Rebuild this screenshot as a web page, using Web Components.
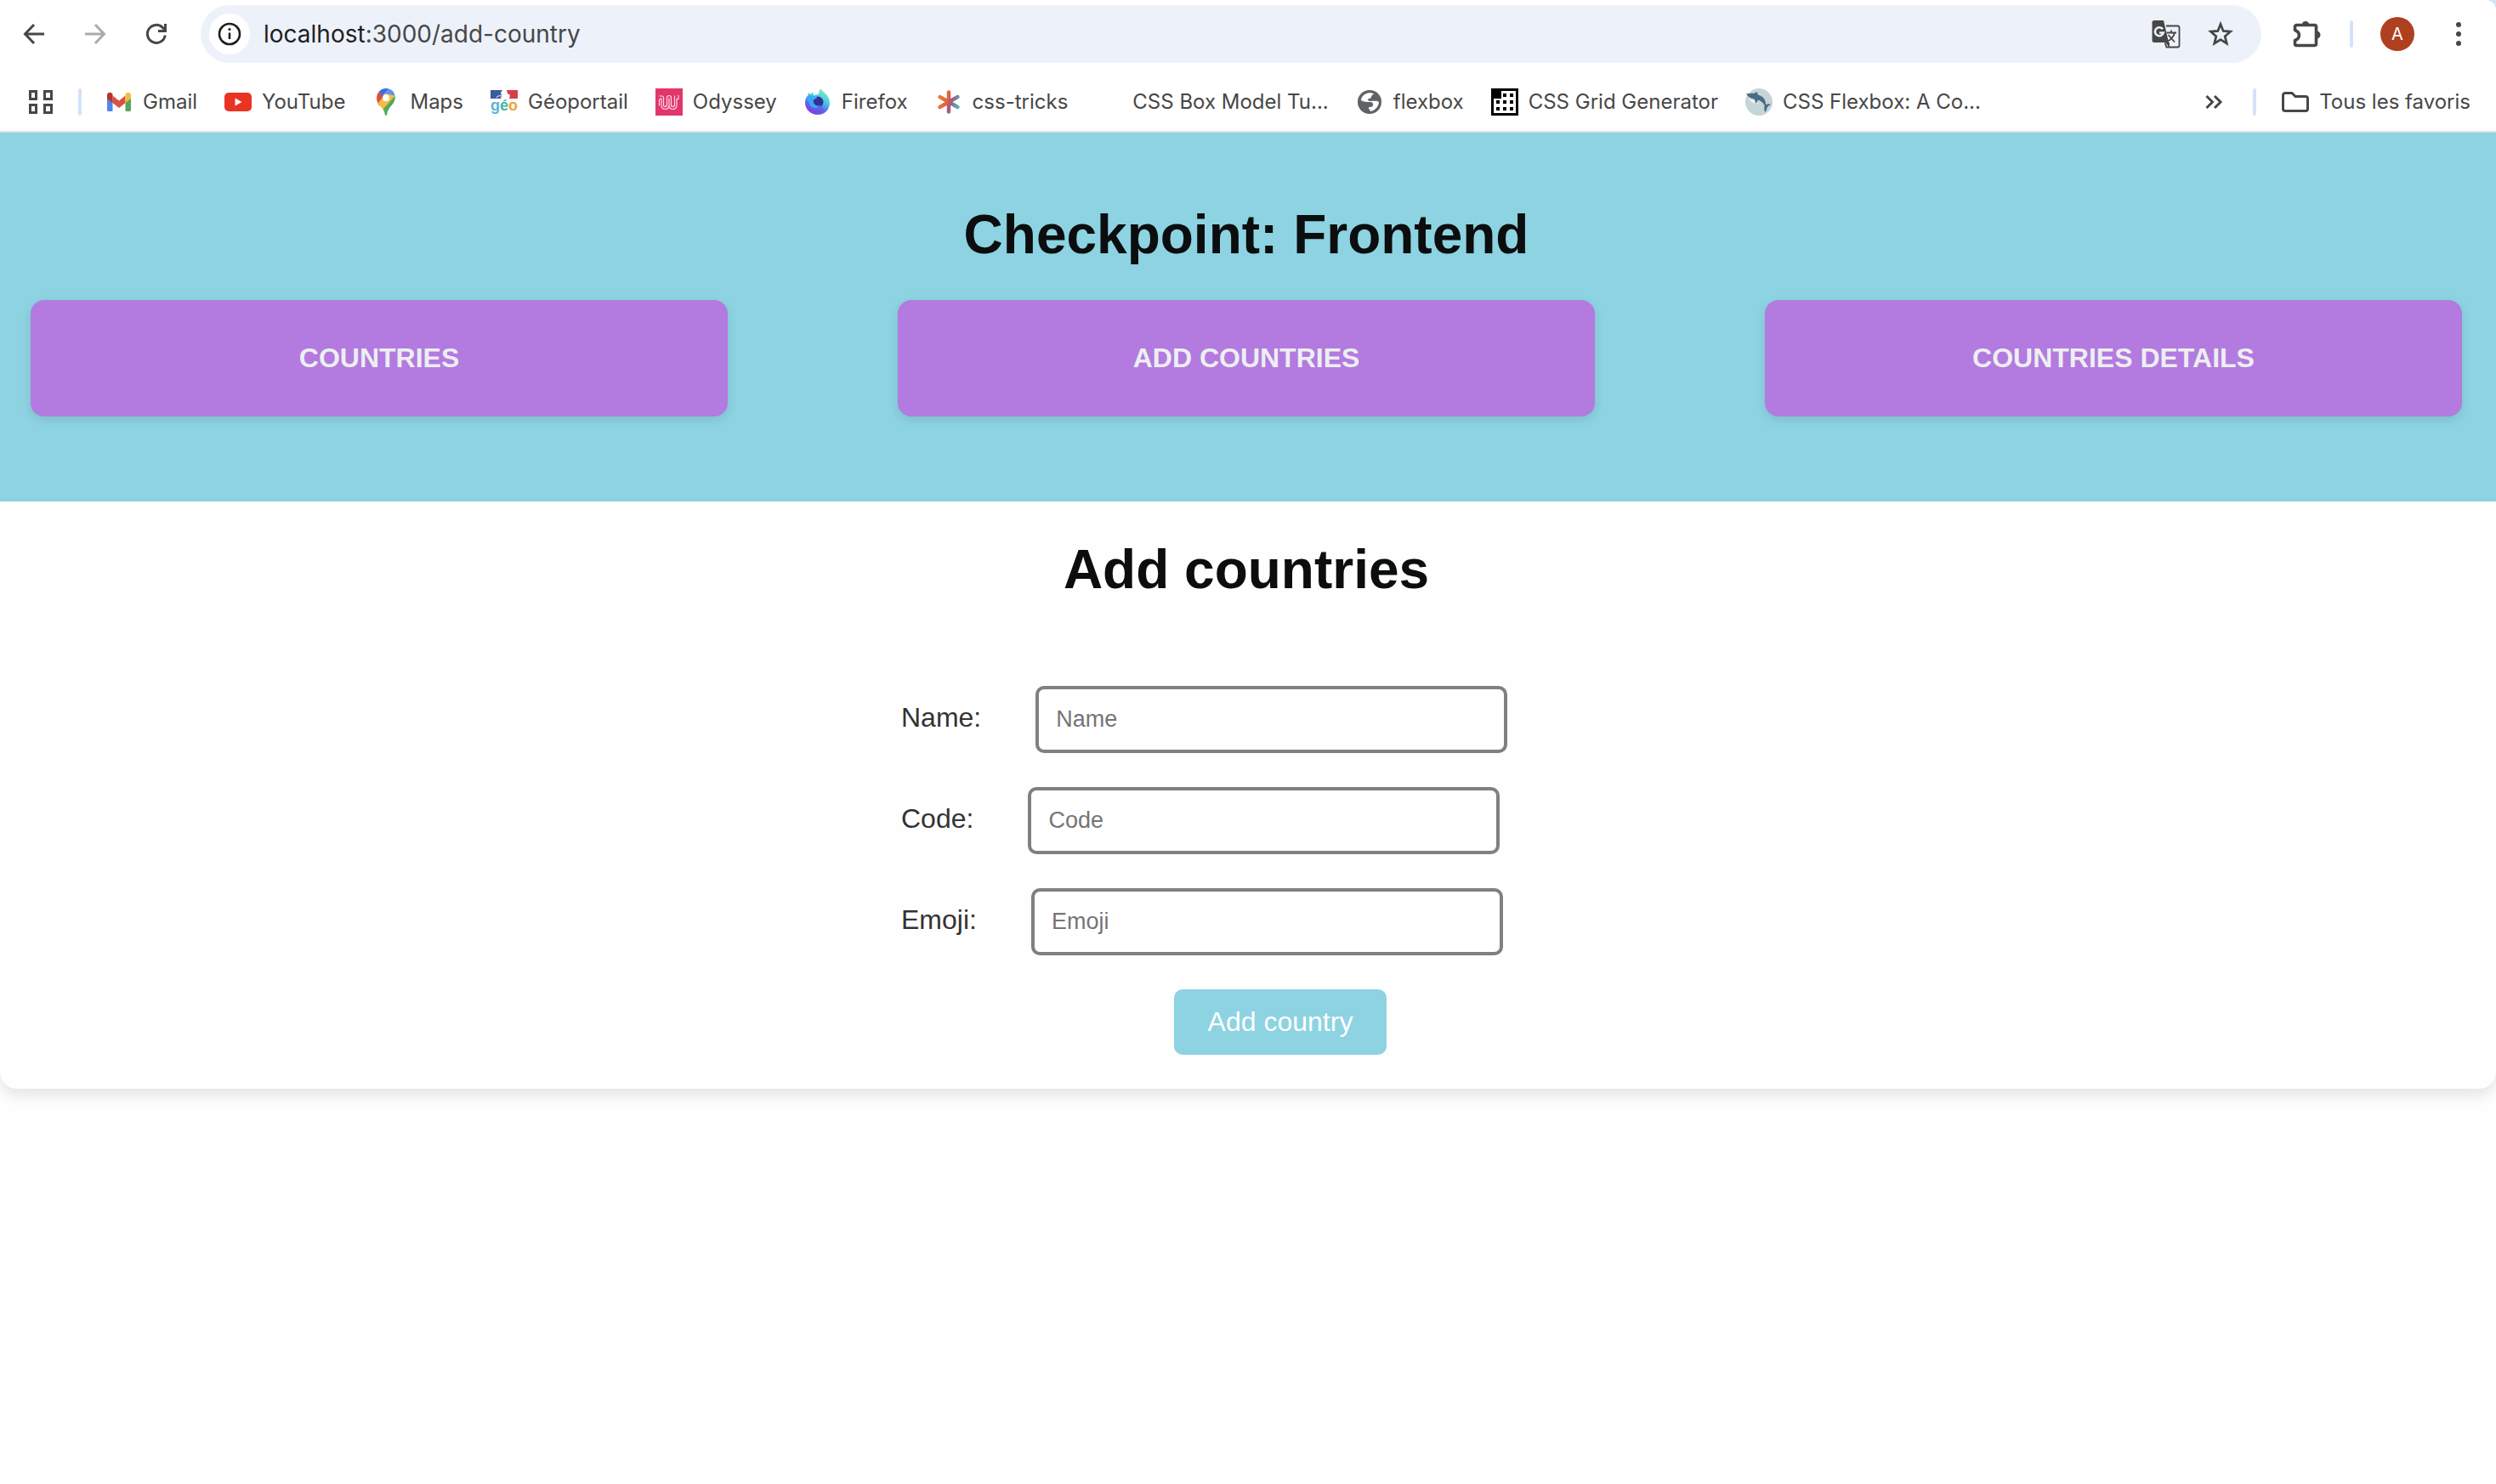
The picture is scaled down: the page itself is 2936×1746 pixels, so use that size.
<!DOCTYPE html>
<html lang="fr">
<head>
<meta charset="utf-8">
<meta name="viewport" content="width=device-width, initial-scale=1">
<title>Checkpoint: Frontend</title>
<style>
  body { margin: 0; min-height: 100vh; background: #fefefe; font-family: "Liberation Sans", Arial, sans-serif; color: #0b0d0e; }
</style>
</head>
<body>
<browser-chrome></browser-chrome>
<app-header title-text="Checkpoint: Frontend">
  <nav-link href="#countries">COUNTRIES</nav-link>
  <nav-link href="#add-country">ADD COUNTRIES</nav-link>
  <nav-link href="#details">COUNTRIES DETAILS</nav-link>
</app-header>
<country-form>
  <form-field label="Name"></form-field>
  <form-field label="Code"></form-field>
  <form-field label="Emoji"></form-field>
</country-form>

<script>
const define = (name, html, setup) => {
  const template = document.createElement('template');
  template.innerHTML = html;
  customElements.define(name, class extends HTMLElement {
    constructor() {
      super();
      this.attachShadow({ mode: 'open' }).append(template.content.cloneNode(true));
    }
    connectedCallback() { if (setup) setup(this, this.shadowRoot); }
  });
};

const svg = (size, body) =>
  `<svg width="${size}" height="${size}" viewBox="0 0 ${size} ${size}" fill="none" aria-hidden="true">${body}</svg>`;

const icons = {
  back: svg(32, '<path d="M28 16H6M16 5L5.500 16L16 27" stroke="#474747" stroke-width="3"/>'),
  forward: svg(32, '<path d="M4 16h22M16 5l10.500 11L16 27" stroke="#ababab" stroke-width="3"/>'),
  reload: svg(32, '<path d="M26.300 17.500A10.500 10.500 0 1 1 23.500 8.600L26 11" stroke="#474747" stroke-width="3"/><path d="M26.500 4v8.500H18" stroke="#474747" stroke-width="3"/>'),
  info: svg(32, '<circle cx="16" cy="16" r="12" stroke="#1f1f1f" stroke-width="2.600"/><path d="M16 14.500v7.500" stroke="#1f1f1f" stroke-width="2.600"/><circle cx="16" cy="10.500" r="1.600" fill="#1f1f1f"/>'),
  translate: svg(36, '<path d="M4 2h11l6 26H4a2.500 2.500 0 0 1-2.500-2.500V4.500A2.500 2.500 0 0 1 4 2z" fill="#474747"/><path d="M17 28l5 6v-6z" fill="#474747"/><path d="M18 8.500h13.500a2 2 0 0 1 2 2v21a2 2 0 0 1-2 2H18.500l-2-5" stroke="#474747" stroke-width="1.800"/><path d="M14 12.300A5 5 0 1 0 14.800 16.500H10" stroke="#edf2fa" stroke-width="2.600"/><path d="M18.500 16.500h11.500M24 13.500v3M28 16.500c-1 4.500-4 7.500-8 10M20.500 19l7.500 8.500" stroke="#474747" stroke-width="1.800"/>'),
  star: svg(32, '<path d="M16 4.500l3.200 8 8.300.7-6.300 5.500 2 8.400L16 22.600l-7.200 4.500 2-8.400-6.300-5.500 8.300-.7z" stroke="#474747" stroke-width="2.800"/>'),
  puzzle: svg(36, '<path d="M3.500 9.500A2 2 0 0 1 5.500 7.500H26.500A2 2 0 0 1 28.500 9.500V29.500A2 2 0 0 1 26.500 31.500H5.500A2 2 0 0 1 3.500 29.500V25.500C10 23.500 10 15.500 3.500 13.500Z" stroke="#474747" stroke-width="3.600" stroke-linejoin="round"/><path d="M12 7a4 4 0 0 1 8 0zM29 14.500a4.500 4.500 0 0 1 0 9z" fill="#474747"/>'),
  dots: svg(40, '<circle cx="20" cy="9" r="3" fill="#474747"/><circle cx="20" cy="20" r="3" fill="#474747"/><circle cx="20" cy="31" r="3" fill="#474747"/>'),
  apps: svg(32, '<path d="M3.500 3.500h7v9h-7zM20.500 3.500h8v9h-8zM3.500 19.500h7v9h-7zM20.500 19.500h8v9h-8z" stroke="#474747" stroke-width="3"/>'),
  gmail: svg(32, '<path d="M2 10v15.500A1.500 1.500 0 0 0 3.500 27H8.500V14z" fill="#4f86ec"/><path d="M30 10v15.500a1.500 1.500 0 0 1-1.500 1.500H23.500V14z" fill="#58a65c"/><path d="M8.500 8.500L16 14.500l7.500-6V17L16 23l-7.500-6z" fill="#d95140"/><path d="M2 12V8c0-3 3.300-4 5.200-2.500L8.500 6.500V17z" fill="#b3362b"/><path d="M30 12V8c0-3-3.300-4-5.200-2.500L23.500 6.500V17z" fill="#f2bd42"/>'),
  youtube: svg(32, '<rect y="5" width="32" height="22" rx="5" fill="#ea3323"/><path d="M12.500 11.500v9l8-4.500z" fill="#fff"/>'),
  maps: svg(32, '<path d="M5 11a11 11 0 0 1 3-7.500L16 11l-8 9.500C6 17 5 14 5 11z" fill="#d95140"/><path d="M8 3.600C11 .2 16 -.8 19.500.6L12 9z" fill="#3d6fe0"/><path d="M19.500.6c4 1.200 6.500 4.400 7.200 8L19 11l-5-4z" fill="#5a93f4"/><path d="M6.500 17.500L16 6l10.800 2.800L14 26c-2-2.500-5.500-5-7.500-8.500z" fill="#f2bd42"/><path d="M26.800 8.800c.8 6.200-3.300 10.200-6.600 14.200-1.800 2.500-2.600 5-3.200 8.200-.3 1.100-1.700 1.100-2 0-.5-2.500-1.200-4.500-2.500-6.700z" fill="#58a65c"/><circle cx="16" cy="11.300" r="4" fill="#fff"/>'),
  geo: svg(32, '<path d="M0 2h14l-2 3 1 3-1 4H0z" fill="#3d5a9e"/><path d="M19 2h13v10H22l1-4-3-2z" fill="#d63e4b"/><path d="M7 11c2-3 5-3 7-1" stroke="#c5cce0" stroke-width="1.500"/><text y="26" font-family="Liberation Sans" font-size="18" font-weight="700"><tspan fill="#5fb0e0">g</tspan><tspan fill="#45b5a0">é</tspan><tspan fill="#f0a23a">o</tspan></text>'),
  odyssey: svg(32, '<rect width="32" height="32" fill="#e2366b"/><g stroke="#fbd9e4" stroke-width="1.200"><path d="M4.500 9h3q2 0 2 2v8.500q0 2 2 2t2-2V11q0-2.500 2.500-2.500t2.500 2.500v8.500q0 2 2 2t2-2V8.500"/><path d="M4.500 20.500V14q0-2 2.500-2v7.500q0 5 4.500 5t4.500-5V11.500v8q0 5 4.500 5t4.500-5V12.500q2 0 2 0V8"/></g>'),
  firefox: svg(32, '<defs><linearGradient id="f" x1=".8" y1="0" x2=".3" y2="1"><stop offset="0" stop-color="#80f5b0"/><stop offset=".4" stop-color="#4ccbea"/><stop offset=".7" stop-color="#5868ec"/><stop offset="1" stop-color="#8a3fe0"/></linearGradient></defs><path d="M19.500 0c.5 4 10 6 10.500 17 0 8-6 14-14 14S1 25 1 17c0-4 1.500-7 3.500-9L5 5l2.500 2L10 4l1 4c3-1 5-1 6-1 0-3 1-5 2.500-7z" fill="url(#f)"/><path d="M3 17c2 8 13 12 20 6-5 9-19 7-20-6z" fill="#7d45df"/><circle cx="16" cy="16" r="6.500" fill="#353095"/><path d="M2 11c3-3 6-3 9-2 2 0 4 1 4 2.500-3 1-5 2-4 5 1 4 6 5 9 3-3 5-12 5-14-2z" fill="#37a9f3"/>'),
  tricks: svg(32, '<defs><linearGradient id="t" gradientUnits="userSpaceOnUse" x1="4" y1="12" x2="28" y2="20"><stop offset="0" stop-color="#ee7f3b"/><stop offset=".4" stop-color="#e0623f"/><stop offset=".6" stop-color="#a55a7c"/><stop offset="1" stop-color="#4fb5bd"/></linearGradient></defs><path d="M16 4.500L16.010 27.500M5.500 10l21 12M26.500 10l-21 12" stroke="url(#t)" stroke-width="4.500" stroke-linecap="round"/>'),
  blank: svg(32, ''),
  globe: svg(32, '<circle cx="16" cy="16" r="14" fill="#5f6368"/><path d="M14 5.500c3-.6 5-.2 7 .7-1 1.300-3 1.800-3 3.800 0 1.500-2 2-3.500 2-1 1 0 3 2 3 4 0 9.500-1 10.500 1.500-.5 5-4.500 9.500-10 10.500l-1-2.500c-2-.5-1-2.500 0-2.500 3 0 4.500-1 4-4-.5-2-3-2-5-2-4 0-7-.5-9-2 0-4 3.500-7.500 8-8.500z" fill="#fff"/>'),
  grid: svg(32, '<path d="M1.500 1.500h29v29h-29z" fill="#fff" stroke="#000" stroke-width="3"/><path d="M0 0h12v12H0zM14 6h4v4h-4zM22 6h4v4h-4zM6 14h4v4H6zM14 14h4v4h-4zM22 14h4v4h-4zM6 22h4v4H6zM14 22h4v4h-4zM22 22h4v4h-4z" fill="#000"/>'),
  dolphin: svg(32, '<circle cx="16" cy="16" r="16" fill="#c5d5d8"/><path d="M3 10c3 3 5 4 8 4l4 4c-4 1-9-2-12-8z" fill="#f3f6f7"/><path d="M1 6c4 1 5-1 9 0 1-1 3-1.500 5-1.500-1 1-1 2 0 3C20 9 24 12 24 19c3-1 5-1 6 0-2 1-4 2-4.500 4s-1 4-2 5c-2-3-1-5-1-8-2-4-5-6-8-6.500 0 2-1.500 4-3 4.500.5-2 0-4-1-5.500C6 12 3 10 1 6z" fill="#4a6b86"/>'),
  chevrons: svg(32, '<path d="M7.500 9l7 7-7 7M17 9l7 7-7 7" stroke="#474747" stroke-width="3"/>'),
  folder: svg(32, '<path d="M1.500 8a2.500 2.500 0 0 1 2.500-2.500h8l4 4h12a2.500 2.500 0 0 1 2.500 2.500v12a2.500 2.500 0 0 1-2.500 2.500H4A2.500 2.500 0 0 1 1.500 24z" stroke="#474747" stroke-width="3"/>')
};

customElements.define('ui-icon', class extends HTMLElement {
  static observedAttributes = ['name'];
  constructor() {
    super();
    this.attachShadow({ mode: 'open' });
  }
  attributeChangedCallback(attribute, previous, name) {
    this.shadowRoot.innerHTML = '<style>:host{display:flex;flex:none}svg{display:block}</style>' + icons[name];
  }
});

define('icon-button', `<style>
  :host { display: flex; flex: none; }
  button { display: flex; padding: 0; border: 0; background: none; border-radius: 16px; }
</style><button><slot></slot></button>`, (el, root) =>
  root.querySelector('button').setAttribute('aria-label', el.getAttribute('label')));

define('bar-divider', `<style>
  :host { display: block; flex: none; width: 4px; height: 32px; border-radius: 2px; background: #d6e1fb; }
</style>`);

define('book-mark', `<style>
  :host { display: flex; flex: none; }
  a { display: flex; align-items: center; gap: 12px; height: 32px; color: #474747; text-decoration: none; white-space: nowrap; }
</style><a href="#"><ui-icon></ui-icon><span><slot></slot></span></a>`, (el, root) =>
  root.querySelector('ui-icon').setAttribute('name', el.getAttribute('icon')));

define('browser-chrome', `<style>
  :host { display: block; background: #d6e1fb; font-family: Inter, Roboto, sans-serif; }
  .frame { background: #fff; border-top-right-radius: 12px; border-bottom: 2px solid #dfe1e2; }
  .toolbar { display: flex; align-items: center; height: 80px; padding: 0 24px; }
  .moves { display: flex; gap: 40px; padding-right: 36px; }
  .address { display: flex; flex: 1; align-items: center; height: 68px; padding: 0 32px 0 10px; border-radius: 34px; background: #edf2fa; gap: 16px; box-sizing: border-box; }
  .site { display: flex; align-items: center; justify-content: center; width: 48px; height: 48px; border-radius: 24px; background: #fff; }
  .url { flex: 1; font-size: 28px; color: #474747; }
  .url b { font-weight: 400; color: #1f1f1f; }
  .tools { display: flex; align-items: center; gap: 30px; }
  .right { display: flex; align-items: center; gap: 32px; padding-left: 36px; }
  .avatar { display: flex; align-items: center; justify-content: center; width: 40px; height: 40px; padding: 0; border: 0; border-radius: 20px; background: #ae401f; color: #fff; font: 20px Inter, sans-serif; }
  .marks { display: flex; align-items: center; padding: 24px 30px 18px 32px; gap: 28px; font-size: 24px; line-height: 32px; }
  .list { display: flex; flex: 1; gap: 32px; }
  .end { display: flex; align-items: center; gap: 30px; }
</style>
<div class="frame">
  <div class="toolbar">
    <div class="moves">
      <icon-button label="Retour"><ui-icon name="back"></ui-icon></icon-button>
      <icon-button label="Avancer"><ui-icon name="forward"></ui-icon></icon-button>
      <icon-button label="Actualiser"><ui-icon name="reload"></ui-icon></icon-button>
    </div>
    <div class="address">
      <span class="site"><ui-icon name="info"></ui-icon></span>
      <span class="url"><b>localhost</b>:3000/add-country</span>
      <div class="tools">
        <icon-button label="Traduire"><ui-icon name="translate"></ui-icon></icon-button>
        <icon-button label="Favori"><ui-icon name="star"></ui-icon></icon-button>
      </div>
    </div>
    <div class="right">
      <icon-button label="Extensions"><ui-icon name="puzzle"></ui-icon></icon-button>
      <bar-divider></bar-divider>
      <button class="avatar">A</button>
      <icon-button label="Menu"><ui-icon name="dots"></ui-icon></icon-button>
    </div>
  </div>
  <div class="marks">
    <icon-button label="Applications"><ui-icon name="apps"></ui-icon></icon-button>
    <bar-divider></bar-divider>
    <div class="list">
      <book-mark icon="gmail">Gmail</book-mark>
      <book-mark icon="youtube">YouTube</book-mark>
      <book-mark icon="maps">Maps</book-mark>
      <book-mark icon="geo">Géoportail</book-mark>
      <book-mark icon="odyssey">Odyssey</book-mark>
      <book-mark icon="firefox">Firefox</book-mark>
      <book-mark icon="tricks">css-tricks</book-mark>
      <book-mark icon="blank">CSS Box Model Tu...</book-mark>
      <book-mark icon="globe">flexbox</book-mark>
      <book-mark icon="grid">CSS Grid Generator</book-mark>
      <book-mark icon="dolphin">CSS Flexbox: A Co...</book-mark>
    </div>
    <div class="end">
      <icon-button label="Plus de favoris"><ui-icon name="chevrons"></ui-icon></icon-button>
      <bar-divider></bar-divider>
      <book-mark icon="folder">Tous les favoris</book-mark>
    </div>
  </div>
</div>`);

define('nav-link', `<style>
  :host { display: block; width: 820px; }
  a { display: block; padding: 50px 20px; border-radius: 16px; background: #b37adf; box-shadow: 0 4px 12px rgba(0,0,0,.1); color: #eceff1; font-size: 32px; line-height: 37px; font-weight: 700; text-align: center; text-decoration: none; }
</style><a><slot></slot></a>`, (el, root) =>
  root.querySelector('a').setAttribute('href', el.getAttribute('href')));

define('app-header', `<style>
  :host { display: block; padding: 84px 40px 100px 36px; background: #8dd3e1; }
  h1 { margin: 0 0 40px; font-size: 64px; line-height: 73px; text-align: center; }
  nav { display: flex; justify-content: space-between; gap: 40px; }
</style><h1></h1><nav><slot></slot></nav>`, (el, root) =>
  root.querySelector('h1').textContent = el.getAttribute('title-text'));

define('form-field', `<style>
  :host { display: flex; }
  .row { display: flex; align-items: baseline; gap: 64px; }
  label { color: #333; font-size: 32px; line-height: 37px; }
  input { width: 555px; height: 79px; box-sizing: border-box; padding: 20px; border: 4px solid #808080; border-radius: 10px; background: #fff; font: 27px "Liberation Sans", Arial, sans-serif; }
  input::placeholder { color: #757575; }
</style><div class="row"><label for="field"></label><input id="field" type="text"></div>`, (el, root) => {
  root.querySelector('label').textContent = el.getAttribute('label') + ':';
  root.querySelector('input').placeholder = el.getAttribute('label');
});

define('country-form', `<style>
  :host { display: block; padding: 44px 4px 40px 0; background: #fefefe; border-radius: 0 0 20px 20px; box-shadow: 0 8px 16px rgba(0,0,0,.1); }
  h2 { margin: 0 0 100px; font-size: 64px; line-height: 73px; text-align: center; }
  form { display: flex; flex-direction: column; gap: 40px; width: 812px; max-width: 100%; margin: 0 auto; }
  button { align-self: center; margin-left: 80px; padding: 20px 40px; border: 0; border-radius: 10px; background: #8dd3e1; color: #fff; font: 32px/37px "Liberation Sans", Arial, sans-serif; }
</style>
<h2>Add countries</h2>
<form><slot></slot><button type="button">Add country</button></form>`);
</script>
</body>
</html>
